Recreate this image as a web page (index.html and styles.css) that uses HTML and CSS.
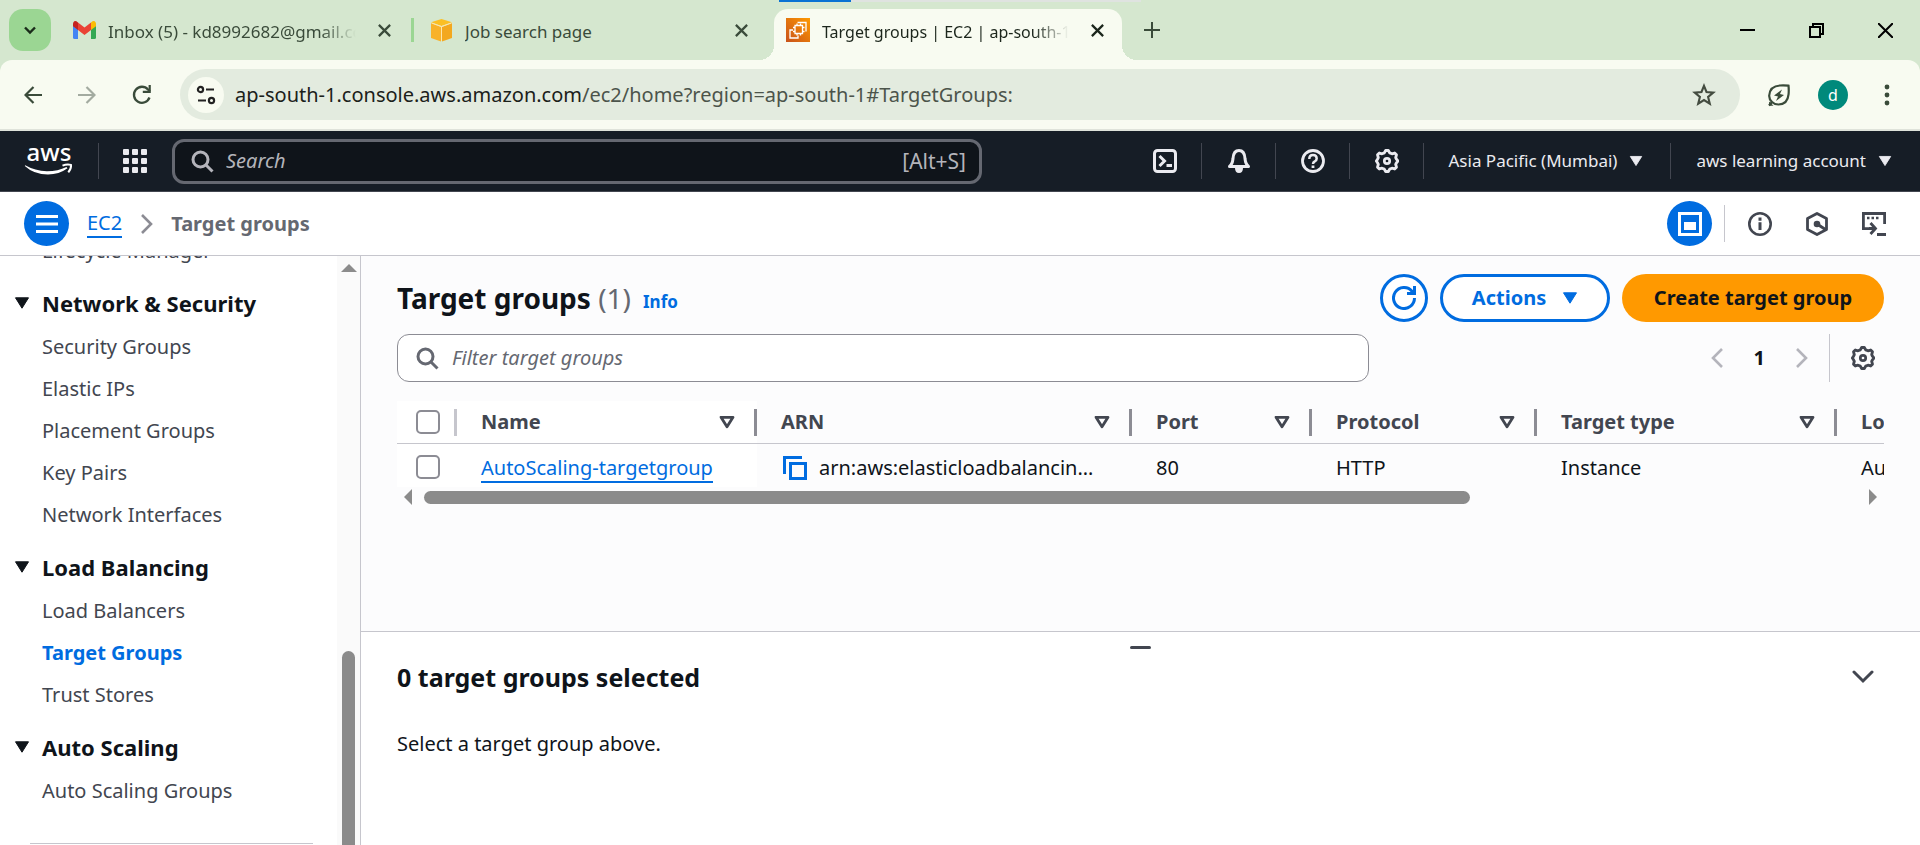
FILE: index.html
```html
<!DOCTYPE html>
<html lang="en">
<head>
<meta charset="utf-8">
<title>Target groups | EC2 | ap-south-1</title>
<link rel="stylesheet" href="styles.css">
</head>
<body>
<svg class="defs" aria-hidden="true">
  <symbol id="x" viewBox="0 0 16 16"><path d="M2 2l12 12M14 2L2 14" fill="none" stroke="currentColor" stroke-width="2.400"/></symbol>
  <symbol id="gear" viewBox="0 0 16 16"><path d="M6.200 2.600 7.100 1h1.800l.9 1.600 1.500.6 1.800-.5 1.200 1.200-.5 1.800.5 1.100 1 1.200-1 1.200-.5 1.100.5 1.800-1.200 1.200-1.800-.5-1.500.6L8.900 15H7.100l-.9-1.600-1.500-.6-1.800.5-1.200-1.200.5-1.800-.5-1.100L.9 8l.8-1.200.5-1.100-.5-1.800 1.200-1.200 1.800.5z" fill="none" stroke="currentColor" stroke-width="1.900" stroke-linejoin="round"/><circle cx="8" cy="8" r="1.800" fill="none" stroke="currentColor" stroke-width="1.800"/></symbol>
  <symbol id="search" viewBox="0 0 16 16"><g fill="none" stroke="currentColor" stroke-width="2"><circle cx="7" cy="7" r="5"/><path d="M10.500 10.500 15 15"/></g></symbol>
  <symbol id="down" viewBox="0 0 16 16"><path d="M1.500 2.800h13L8 13.200z" fill="currentColor" stroke="currentColor" stroke-linejoin="round"/></symbol>
  <symbol id="sort" viewBox="0 0 16 16"><path d="M2 3.300h12L8 12.800z" fill="none" stroke="currentColor" stroke-width="2.800" stroke-linejoin="round"/></symbol>
  <symbol id="left" viewBox="0 0 12 20"><path d="M11 1 2 10l9 9" fill="none" stroke="currentColor" stroke-width="2.600"/></symbol>
  <symbol id="right" viewBox="0 0 12 20"><path d="m1 1 9 9-9 9" fill="none" stroke="currentColor" stroke-width="2.600"/></symbol>
</svg>

<header class="browser">
  <div class="tabstrip">
    <span class="loadbar"></span>
    <button class="tab-search" aria-label="Search tabs"><svg width="16" height="16" viewBox="0 0 16 16"><path d="m3 5.500 5 5 5-5" fill="none" stroke="#1a2b1a" stroke-width="2.400"/></svg></button>
    <div class="tab tab-mail">
      <svg width="23" height="18" viewBox="0 0 23 18"><path d="M0 3v13.500Q0 18 1.500 18H5V7z" fill="#4285f4"/><path d="M18 7v11h3.500q1.500 0 1.500-1.500V3z" fill="#34a853"/><path d="M5 1.500V9l6.500 5L18 9V1.500l-6.500 5z" fill="#ea4335"/><path d="M0 3v2.300L5 9V1.500Q2-1 .6 1 0 1.800 0 3z" fill="#c5221f"/><path d="M23 3v2.300L18 9V1.500Q21-1 22.400 1q.6.800.6 2z" fill="#fbbc04"/></svg>
      <span class="tab-title">Inbox (5) - kd8992682@gmail.com</span>
      <button class="close" aria-label="Close tab"><svg width="15" height="15"><use href="#x"/></svg></button>
    </div>
    <div class="tab tab-job">
      <svg width="23" height="23" viewBox="0 0 23 23"><path d="M1 4l10 4v14.500L1 19z" fill="#f8b22a"/><path d="M22 4 12 8v14.500L22 19z" fill="#f3a81f"/><path d="M11.500 0 22 3.300 11.500 7 1 3.300z" fill="#fbbf24"/><path d="M1.500 4 11.500 7.500 21.500 4M11.500 7.500v14" stroke="#ffe6a8" fill="none"/></svg>
      <span class="tab-title">Job search page</span>
      <button class="close" aria-label="Close tab"><svg width="15" height="15"><use href="#x"/></svg></button>
    </div>
    <div class="tab tab-active">
      <svg width="24" height="24" viewBox="0 0 24 24"><defs><linearGradient id="og" x1="0" y1="1" x2="1" y2="0"><stop stop-color="#c8511b"/><stop offset="1" stop-color="#f90"/></linearGradient></defs><path fill="url(#og)" d="M0 0h24v24H0z"/><g fill="none" stroke="#fff" stroke-width="1.300"><path d="M9 7.500h7.500v8H9zM11 5.500v2M14.500 5.500v2M11 15.500v2M14.500 15.500v2M7 9.500h2M7 13.500h2M16.500 9.500h2M16.500 13.500h2"/><path d="M11.500 4.500h8.500v9M7 12H4v8h8v-2.500"/></g></svg>
      <span class="tab-title">Target groups | EC2 | ap-south-1</span>
      <button class="close" aria-label="Close tab"><svg width="15" height="15"><use href="#x"/></svg></button>
    </div>
    <button class="newtab" aria-label="New tab"><svg width="16" height="16" viewBox="0 0 16 16"><path d="M8 0v16M0 8h16" stroke="currentColor" stroke-width="2"/></svg></button>
    <div class="window-controls">
      <button aria-label="Minimize"><svg width="15" height="15" viewBox="0 0 15 15"><path d="M0 7h15" stroke="#000" stroke-width="2"/></svg></button>
      <button aria-label="Restore"><svg width="15" height="15" viewBox="0 0 15 15"><path d="M1 4h10v10H1zM4 4V1h10v10h-3" fill="none" stroke="#000" stroke-width="2"/></svg></button>
      <button aria-label="Close"><svg width="15" height="15" viewBox="0 0 15 15"><path d="m0 0 15 15M15 0 0 15" stroke="#000" stroke-width="2"/></svg></button>
    </div>
  </div>
  <div class="toolbar">
    <button aria-label="Back"><svg width="18" height="18" viewBox="0 0 18 18"><path d="M18 9H2M9.500 1 1.500 9l8 8" fill="none" stroke="#3a4b3a" stroke-width="2.200"/></svg></button>
    <button aria-label="Forward"><svg width="18" height="18" viewBox="0 0 18 18"><path d="M0 9h16M8.500 1l8 8-8 8" fill="none" stroke="#a3aba0" stroke-width="2.200"/></svg></button>
    <button aria-label="Reload"><svg width="20" height="20" viewBox="0 0 20 20"><path d="M17.500 12.500A8 8 0 1 1 16 4.500l2 2" fill="none" stroke="#3a4b3a" stroke-width="2.300"/><path d="M18.800 0v8h-8V5.800h5.800V0z" fill="#3a4b3a"/></svg></button>
    <div class="omnibox">
      <button class="site-info" aria-label="View site information"><svg width="20" height="20" viewBox="0 0 20 20"><g fill="none" stroke="#222" stroke-width="2.200"><circle cx="4.500" cy="4.500" r="2.600"/><path d="M10 4.500h8M2 15.500h8"/><circle cx="15.500" cy="15.500" r="2.600"/></g></svg></button>
      <p class="url">ap-south-1.console.aws.amazon.com<span>/ec2/home?region=ap-south-1#TargetGroups:</span></p>
      <button class="star" aria-label="Bookmark this tab"><svg width="24" height="24" viewBox="0 0 24 24"><path d="m12 2.800 2.500 6.200 6.800.6-5.200 4.400 1.700 6.700L12 17.100l-5.800 3.600L7.900 14 2.700 9.600l6.800-.6z" fill="none" stroke="#444c40" stroke-width="2.100"/></svg></button>
    </div>
    <button aria-label="Energy saver"><svg width="24" height="24" viewBox="0 0 24 24"><path d="M2 22.500 5 19Q2 16 2.200 12.500 3 3 13 2.500q4-.3 8.500.2.500 5 0 9-1 9.800-10 9.800-4 0-6.500-2.500" fill="none" stroke="#3a4b3a" stroke-width="2.200"/><path d="M2 18.500v4.200h4.500z" fill="#3a4b3a"/><path d="m15 6.500-8 6 4 1-2 4.500 8-6-4-1z" fill="#3a4b3a"/></svg></button>
    <button class="avatar" aria-label="Profile">d</button>
    <button aria-label="Menu"><svg width="6" height="22" viewBox="0 0 6 22" fill="#3a4b3a"><circle cx="3" cy="3" r="2.400"/><circle cx="3" cy="11" r="2.400"/><circle cx="3" cy="19" r="2.400"/></svg></button>
  </div>
</header>

<nav class="awsbar">
  <a class="logo" href="#" aria-label="AWS home"><svg width="50" height="34" viewBox="0 0 50 34"><text x="25" y="18" text-anchor="middle" class="logo-text">aws</text><path d="M1.200 22.300Q11 28 23 28.200 34 28.200 42.500 24l1 1.300Q35 31.500 24 31.600 10 31.500.8 23z" fill="#fff"/><path d="M38.500 22.700q4.500-2 8.500-.8.500 3.500-2.700 7.500" fill="none" stroke="#fff" stroke-width="2"/></svg></a>
  <button class="apps" aria-label="Services"><svg width="24" height="24" viewBox="0 0 24 24" fill="#ebebf0"><g id="dots"><rect width="6" height="6" rx="1"/><rect x="9" width="6" height="6" rx="1"/><rect x="18" width="6" height="6" rx="1"/></g><use href="#dots" y="9"/><use href="#dots" y="18"/></svg></button>
  <label class="aws-search"><svg width="24" height="24"><use href="#search"/></svg><input type="search" placeholder="Search" aria-label="Search"><span>[Alt+S]</span></label>
  <div class="aws-tools">
    <button aria-label="CloudShell"><svg width="24" height="24" viewBox="0 0 24 24" fill="none" stroke="currentColor" stroke-width="3"><rect x="1.500" y="1.500" width="21" height="21" rx="3"/><path d="m6.500 7 5 5-5 5M13.500 16.500h5.500"/></svg></button>
    <button aria-label="Notifications"><svg width="24" height="24" viewBox="0 0 24 24"><path d="M2.500 17.500q3-2.500 3.500-8Q6.500 1.500 12 1.500t6 8q.5 5.500 3.500 8z" fill="none" stroke="currentColor" stroke-width="3" stroke-linejoin="round"/><path d="M8 19h8q0 5-4 5t-4-5z" fill="currentColor"/></svg></button>
    <button aria-label="Help"><svg width="24" height="24" viewBox="0 0 24 24" fill="none" stroke="currentColor" stroke-width="2.800"><circle cx="12" cy="12" r="10.500"/><path d="M8.300 10q0-4 3.700-4t3.700 3.500q0 2-2 3-1.700.8-1.700 2.500" stroke-width="2.500"/><path d="M12 16.500V19"/></svg></button>
    <button aria-label="Settings"><svg width="24" height="24"><use href="#gear"/></svg></button>
    <button class="menu">Asia Pacific (Mumbai)<svg width="14" height="14"><use href="#down"/></svg></button>
    <button class="menu">aws learning account<svg width="14" height="14"><use href="#down"/></svg></button>
  </div>
</nav>

<div class="crumbs">
  <button class="round" aria-label="Open navigation"><svg width="22" height="18" viewBox="0 0 22 18"><path d="M0 1.500h22M0 9h22M0 16.500h22" stroke="#fff" stroke-width="3"/></svg></button>
  <a href="#">EC2</a>
  <svg class="crumb-sep" width="12" height="20"><use href="#right"/></svg>
  <span class="current">Target groups</span>
  <div class="crumb-tools">
    <button class="round" aria-label="Split panel"><svg width="24" height="24" viewBox="0 0 24 24"><path d="M1.500 1.500h21v21h-21z" fill="none" stroke="#fff" stroke-width="3"/><path d="M6 10h12v8H6z" fill="#fff"/></svg></button>
    <i></i>
    <button aria-label="Info"><svg width="24" height="24" viewBox="0 0 24 24" fill="none" stroke="currentColor" stroke-width="2.600"><circle cx="12" cy="12" r="10.700"/><path d="M12 5.500v3.200M12 10.300V18" stroke-width="3"/></svg></button>
    <button aria-label="Amazon Q"><svg width="24" height="24" viewBox="0 0 24 24"><path d="M12 1.500 21.500 6.500v11L12 22.500l-9.500-5v-11z" fill="none" stroke="currentColor" stroke-width="2.800" stroke-linejoin="round"/><circle cx="12" cy="12" r="3.300" fill="currentColor"/><path d="m12 12 8.500 5.500" stroke="currentColor" stroke-width="3"/></svg></button>
    <button aria-label="CloudShell panel"><svg width="24" height="24" viewBox="0 0 24 24" fill="none" stroke="currentColor" stroke-width="2.800"><path d="M7 16.600H1.400V1.500h21.200V12M15 22.500h9M7 16.500h6M8.500 11l5 5.500-5 5.500"/><path d="M5 6h2.500M9.500 6H12M14 6h2.500" stroke-width="2.500"/></svg></button>
  </div>
</div>

<div class="workspace">
  <aside class="sidebar">
    <nav class="sidenav">
      <a href="#">Lifecycle Manager</a>
      <button><svg width="16" height="16"><use href="#down"/></svg>Network &amp; Security</button>
      <a href="#">Security Groups</a>
      <a href="#">Elastic IPs</a>
      <a href="#">Placement Groups</a>
      <a href="#">Key Pairs</a>
      <a href="#">Network Interfaces</a>
      <button><svg width="16" height="16"><use href="#down"/></svg>Load Balancing</button>
      <a href="#">Load Balancers</a>
      <a href="#" class="selected">Target Groups</a>
      <a href="#">Trust Stores</a>
      <button><svg width="16" height="16"><use href="#down"/></svg>Auto Scaling</button>
      <a href="#">Auto Scaling Groups</a>
      <hr>
    </nav>
    <div class="vscroll"><svg width="16" height="8" viewBox="0 0 16 8"><path d="M0 8 8 0l8 8z" fill="#8b8b8b"/></svg><span></span></div>
  </aside>

  <main>
    <section class="groups">
      <div class="head">
        <h1>Target groups <span>(1)</span></h1><a class="info" href="#">Info</a>
        <div class="actions">
          <button class="btn icon" aria-label="Refresh"><svg width="24" height="24" viewBox="0 0 24 24"><path d="M22.500 12A10.500 10.500 0 1 1 20 5.200l2 2.300" fill="none" stroke="currentColor" stroke-width="3"/><path d="M21 0h3v9h-9V6h6z" fill="currentColor"/></svg></button>
          <button class="btn drop">Actions<svg width="16" height="16"><use href="#down"/></svg></button>
          <button class="btn primary">Create target group</button>
        </div>
      </div>
      <div class="tools">
        <label class="filter"><svg width="24" height="24"><use href="#search"/></svg><input type="search" placeholder="Filter target groups" aria-label="Filter target groups"></label>
        <div class="pages">
          <button aria-label="Previous page" disabled><svg width="12" height="20"><use href="#left"/></svg></button>
          <button class="num">1</button>
          <button aria-label="Next page" disabled><svg width="12" height="20"><use href="#right"/></svg></button>
          <i></i>
          <button class="prefs" aria-label="Preferences"><svg width="24" height="24"><use href="#gear"/></svg></button>
        </div>
      </div>
      <div class="table-wrap">
        <table>
          <colgroup><col class="c60"><col class="c300"><col class="c375"><col class="c180"><col class="c225"><col class="c300"><col class="c375"></colgroup>
          <thead><tr>
            <th class="pin check"><input type="checkbox" aria-label="Select all"></th>
            <th class="pin"><div>Name<svg width="16" height="16"><use href="#sort"/></svg></div></th>
            <th><div>ARN<svg width="16" height="16"><use href="#sort"/></svg></div></th>
            <th><div>Port<svg width="16" height="16"><use href="#sort"/></svg></div></th>
            <th><div>Protocol<svg width="16" height="16"><use href="#sort"/></svg></div></th>
            <th><div>Target type<svg width="16" height="16"><use href="#sort"/></svg></div></th>
            <th><div>Load balancer</div></th>
          </tr></thead>
          <tbody><tr>
            <td class="pin check"><input type="checkbox" aria-label="Select AutoScaling-targetgroup"></td>
            <td class="pin"><a href="#">AutoScaling-targetgroup</a></td>
            <td><div class="arn"><button aria-label="Copy ARN"><svg width="24" height="24" viewBox="0 0 24 24" fill="none" stroke="#006ce0" stroke-width="3"><path d="M1.500 18V1.500H19"/><path d="M7.500 7.500h15v15h-15z"/></svg></button><span>arn:aws:elasticloadbalancin…</span></div></td>
            <td>80</td><td>HTTP</td><td>Instance</td><td>AutoScaling</td>
          </tr></tbody>
        </table>
      </div>
      <div class="hscroll"><svg width="8" height="16" viewBox="0 0 8 16"><path d="M8 0 0 8l8 8z" fill="#8b8b8b"/></svg><div><span></span></div><svg width="8" height="16" viewBox="0 0 8 16"><path d="m0 0 8 8-8 8z" fill="#8b8b8b"/></svg></div>
    </section>
    <section class="split">
      <span class="handle"></span>
      <div class="split-head"><h2>0 target groups selected</h2><button aria-label="Collapse"><svg width="22" height="14" viewBox="0 0 22 14"><path d="m2 2 9 9 9-9" fill="none" stroke="#424650" stroke-width="3" stroke-linecap="round"/></svg></button></div>
      <p>Select a target group above.</p>
    </section>
  </main>
</div>
</body>
</html>
```
FILE: styles.css
```css
* { box-sizing: border-box; }
body { margin: 0; height: 100vh; display: flex; flex-direction: column; overflow: hidden; font: 20px/30px "Noto Sans", sans-serif; color: #0f141a; background: #fff; }
button { border: 0; background: none; padding: 0; margin: 0; font: inherit; color: inherit; display: flex; align-items: center; justify-content: center; }
input { font: inherit; color: inherit; }
h1, h2, p { margin: 0; }
svg { display: block; flex: none; }
.defs { position: absolute; width: 0; height: 0; }

/* Browser frame */
.browser { flex: none; background: #d5e7cf; font-size: 18px; color: #3a4b3a; }
.tabstrip { display: flex; height: 60px; padding: 9px 0 0 9px; position: relative; }
.loadbar { position: absolute; top: 0; left: 779px; width: 362px; height: 2px; background: linear-gradient(90deg, #0972d3 20%, #dfe3e0 20%); }
.tab-search { width: 42px; height: 42px; border-radius: 14px; background: #9bd693; }
.tab { display: flex; align-items: center; height: 42px; }
.tab-title { flex: 1; min-width: 0; padding-top: 3px; overflow: hidden; white-space: nowrap; font-size: 17px; }
.tab-mail { width: 363px; padding: 0 19px 0 22px; border-right: 3px solid #9bd693; height: 24px; margin-top: 9px; }
.tab-mail .tab-title, .tab-job .tab-title { margin: 0 16px 0 12px; }
.tab-mail .tab-title, .tab-active .tab-title { -webkit-mask-image: linear-gradient(90deg, #000 84%, transparent 98%); mask-image: linear-gradient(90deg, #000 84%, transparent 98%); }
.tab-job { width: 360px; padding: 0 25px 0 16px; }
.tab-active { position: relative; width: 348px; height: 51px; padding: 0 17px 9px 12px; background: #f8fbf1; border-radius: 14px 14px 0 0; color: #1c261c; }
.tab-active::before, .tab-active::after { content: ""; position: absolute; bottom: 0; width: 15px; height: 15px; }
.tab-active::before { right: 100%; background: radial-gradient(circle at 0 0, transparent 15px, #f8fbf1 15px); }
.tab-active::after { left: 100%; background: radial-gradient(circle at 100% 0, transparent 15px, #f8fbf1 15px); }
.tab-active .tab-title { margin: 0 16px 0 12px; font-size: 16px; }
.newtab { height: 42px; margin-left: 22px; }
.window-controls { display: flex; gap: 54px; height: 42px; margin-left: auto; padding-right: 27px; }
.toolbar { display: flex; align-items: center; gap: 36px; height: 71px; padding: 0 30px 0 24px; background: #f8fbf1; border-radius: 12px 12px 0 0; border-bottom: 2px solid #dfe3da; }
.omnibox { flex: 1; display: flex; align-items: center; height: 51px; margin-right: -9px; margin-left: -8px; padding: 0 24px 0 8px; border-radius: 26px; background: #e3ebdf; }
.site-info { width: 36px; height: 36px; border-radius: 50%; background: #f8fbf1; }
.url { flex: 1; margin-left: 11px; font-size: 20px; color: #1b211a; }
.url span { color: #4c544b; }
.toolbar .avatar { width: 30px; height: 30px; margin-left: -9px; border-radius: 50%; background: #00897b; color: #fff; font-size: 16px; }

/* Console navigation */
.awsbar { flex: none; display: flex; align-items: center; height: 61px; padding: 0 28px 0 24px; background: #161d26; border-bottom: 1px solid #424650; color: #ebebf0; }
.logo { padding-right: 24px; border-right: 1px solid #424650; height: 36px; }
.logo svg { overflow: visible; }
.logo-text { font: 500 24px "Noto Sans", sans-serif; fill: #fff; }
.apps { margin: 0 25px 0 24px; }
.aws-search { display: flex; align-items: center; flex: 0 1 810px; height: 45px; padding: 0 13px 0 15px; border: 3px solid #656871; border-radius: 12px; background: #0f141a; color: #b4b4bb; }
.aws-search input { flex: 1; min-width: 0; margin-left: 12px; padding: 0; border: 0; outline: 0; background: none; }
.aws-search span { font-size: 21px; }
::placeholder { font-style: italic; color: inherit; opacity: 1; }
.aws-tools { display: flex; margin-left: auto; }
.aws-tools button { height: 36px; padding: 0 24px 0 25px; border-right: 1px solid #424650; font-size: 17px; gap: 12px; white-space: nowrap; }
.aws-tools button:last-child { border: 0; padding-right: 0; }
.aws-tools .menu { padding-right: 27px; }

/* Breadcrumb bar */
.crumbs { flex: none; display: flex; align-items: center; height: 64px; padding: 0 34px 0 24px; border-bottom: 1px solid #c6c6cd; }
.round { width: 45px; height: 45px; border-radius: 50%; background: #006ce0; }
a { color: #006ce0; text-decoration: none; }
.crumbs a { margin-left: 18px; line-height: 26px; border-bottom: 2px solid; }
.crumb-sep { margin: 0 18px 0 19px; color: #8c8c94; }
.current { font-weight: 700; color: #656871; }
.crumb-tools { display: flex; align-items: center; margin-left: auto; gap: 33px; color: #424650; }
.crumb-tools i { width: 1px; height: 37px; margin: 0 -10px 0 -21px; background: #c6c6cd; }

/* Side navigation */
.workspace { flex: 1; min-height: 0; display: flex; }
.sidebar { flex: none; display: flex; width: 361px; overflow: hidden; border-right: 1px solid #c6c6cd; }
.sidenav { flex: 1; margin-top: -26px; }
.sidenav a { display: block; padding: 6px 0 6px 42px; color: #424650; }
.sidenav .selected { font-weight: 700; color: #006ce0; }
.sidenav button { height: 54px; padding: 8px 0 0 14px; gap: 12px; font-size: 22px; font-weight: 700; }
.sidenav hr { margin: 31px 24px 0 30px; border: 0; border-top: 1px solid #c6c6cd; }
.vscroll { width: 23px; display: flex; flex-direction: column; align-items: center; padding-top: 8px; background: #fafafa; }
.vscroll span { height: 194px; width: 13px; margin-top: auto; border-radius: 7px 7px 0 0; background: #8b8b8b; }

/* Target groups */
main { flex: 1; min-width: 0; display: flex; flex-direction: column; }
.groups { flex: 1; min-height: 0; padding: 18px 36px 0; background: #fcfcfd; }
.head { display: flex; align-items: center; height: 48px; }
h1, h2 { line-height: 36px; font-weight: 700; white-space: nowrap; }
h1 { font-size: 28px; }
h2 { font-size: 25px; }
h1 span { font-weight: 400; color: #656871; }
.info { margin: 7px 0 0 12px; font-size: 17px; font-weight: 700; }
.actions { display: flex; gap: 12px; margin-left: auto; }
.btn { height: 48px; border: 3px solid #006ce0; border-radius: 24px; background: #fff; color: #006ce0; font-weight: 700; white-space: nowrap; }
.icon { width: 48px; }
.drop { width: 170px; gap: 16px; }
.primary { width: 262px; border: 0; background: #f90; color: #0f141a; }
.tools { display: flex; justify-content: space-between; margin-top: 12px; }
.filter { display: flex; align-items: center; flex: 0 1 972px; height: 48px; padding: 0 17px; border: 1px solid #8c8c94; border-radius: 12px; background: #fff; color: #656871; }
.filter input { flex: 1; margin-left: 13px; padding: 0; border: 0; outline: 0; background: none; }
.pages { display: flex; align-items: center; padding-right: 9px; color: #424650; }
.pages button:disabled { color: #b4b4bb; }
.pages .num { margin: 0 31px; font-weight: 700; color: #0f141a; }
.pages i { width: 1px; height: 48px; margin: 0 21px; background: #c6c6cd; }
.table-wrap { margin-top: 19px; overflow: hidden; }
table { width: 1815px; table-layout: fixed; border-collapse: separate; border-spacing: 0; }
.c60 { width: 60px; } .c180 { width: 180px; } .c225 { width: 225px; } .c300 { width: 300px; } .c375 { width: 375px; }
th, td { height: 43px; padding: 0 22px 0 24px; text-align: left; white-space: nowrap; vertical-align: middle; }
td { padding-top: 4px; }
th { border-bottom: 1px solid #c6c6cd; font-weight: 700; color: #424650; background: linear-gradient(#8c8c94, #8c8c94) 100% 8px / 3px 27px no-repeat; }
th div { display: flex; align-items: center; justify-content: space-between; }
.pin { background-color: #fff; }
.check { padding: 0 0 0 19px; }
th.check { background-image: linear-gradient(#c6c6cd, #c6c6cd); }
td.check { padding-top: 2px; }
.check input { display: block; appearance: none; width: 24px; height: 24px; margin: 0; border: 2px solid #8c8c94; border-radius: 5px; background: #fff; }
td a { display: inline-block; line-height: 26px; border-bottom: 2px solid; }
.arn { display: flex; align-items: center; gap: 12px; padding-left: 2px; }
.hscroll { display: flex; align-items: center; height: 20px; padding: 0 7px; }
.hscroll div { flex: 1; margin: 0 12px; }
.hscroll span { display: block; width: 73%; height: 13px; border-radius: 7px; background: #8b8b8b; }

/* Split panel */
.split { flex: 0 0 214px; display: flex; flex-direction: column; padding: 14px 36px 0; border-top: 1px solid #c6c6cd; }
.handle { align-self: center; width: 21px; height: 3px; border-radius: 2px; background: #424650; }
.split-head { display: flex; justify-content: space-between; padding: 10px 10px 0 0; }
.split p { margin-top: 34px; }
```
